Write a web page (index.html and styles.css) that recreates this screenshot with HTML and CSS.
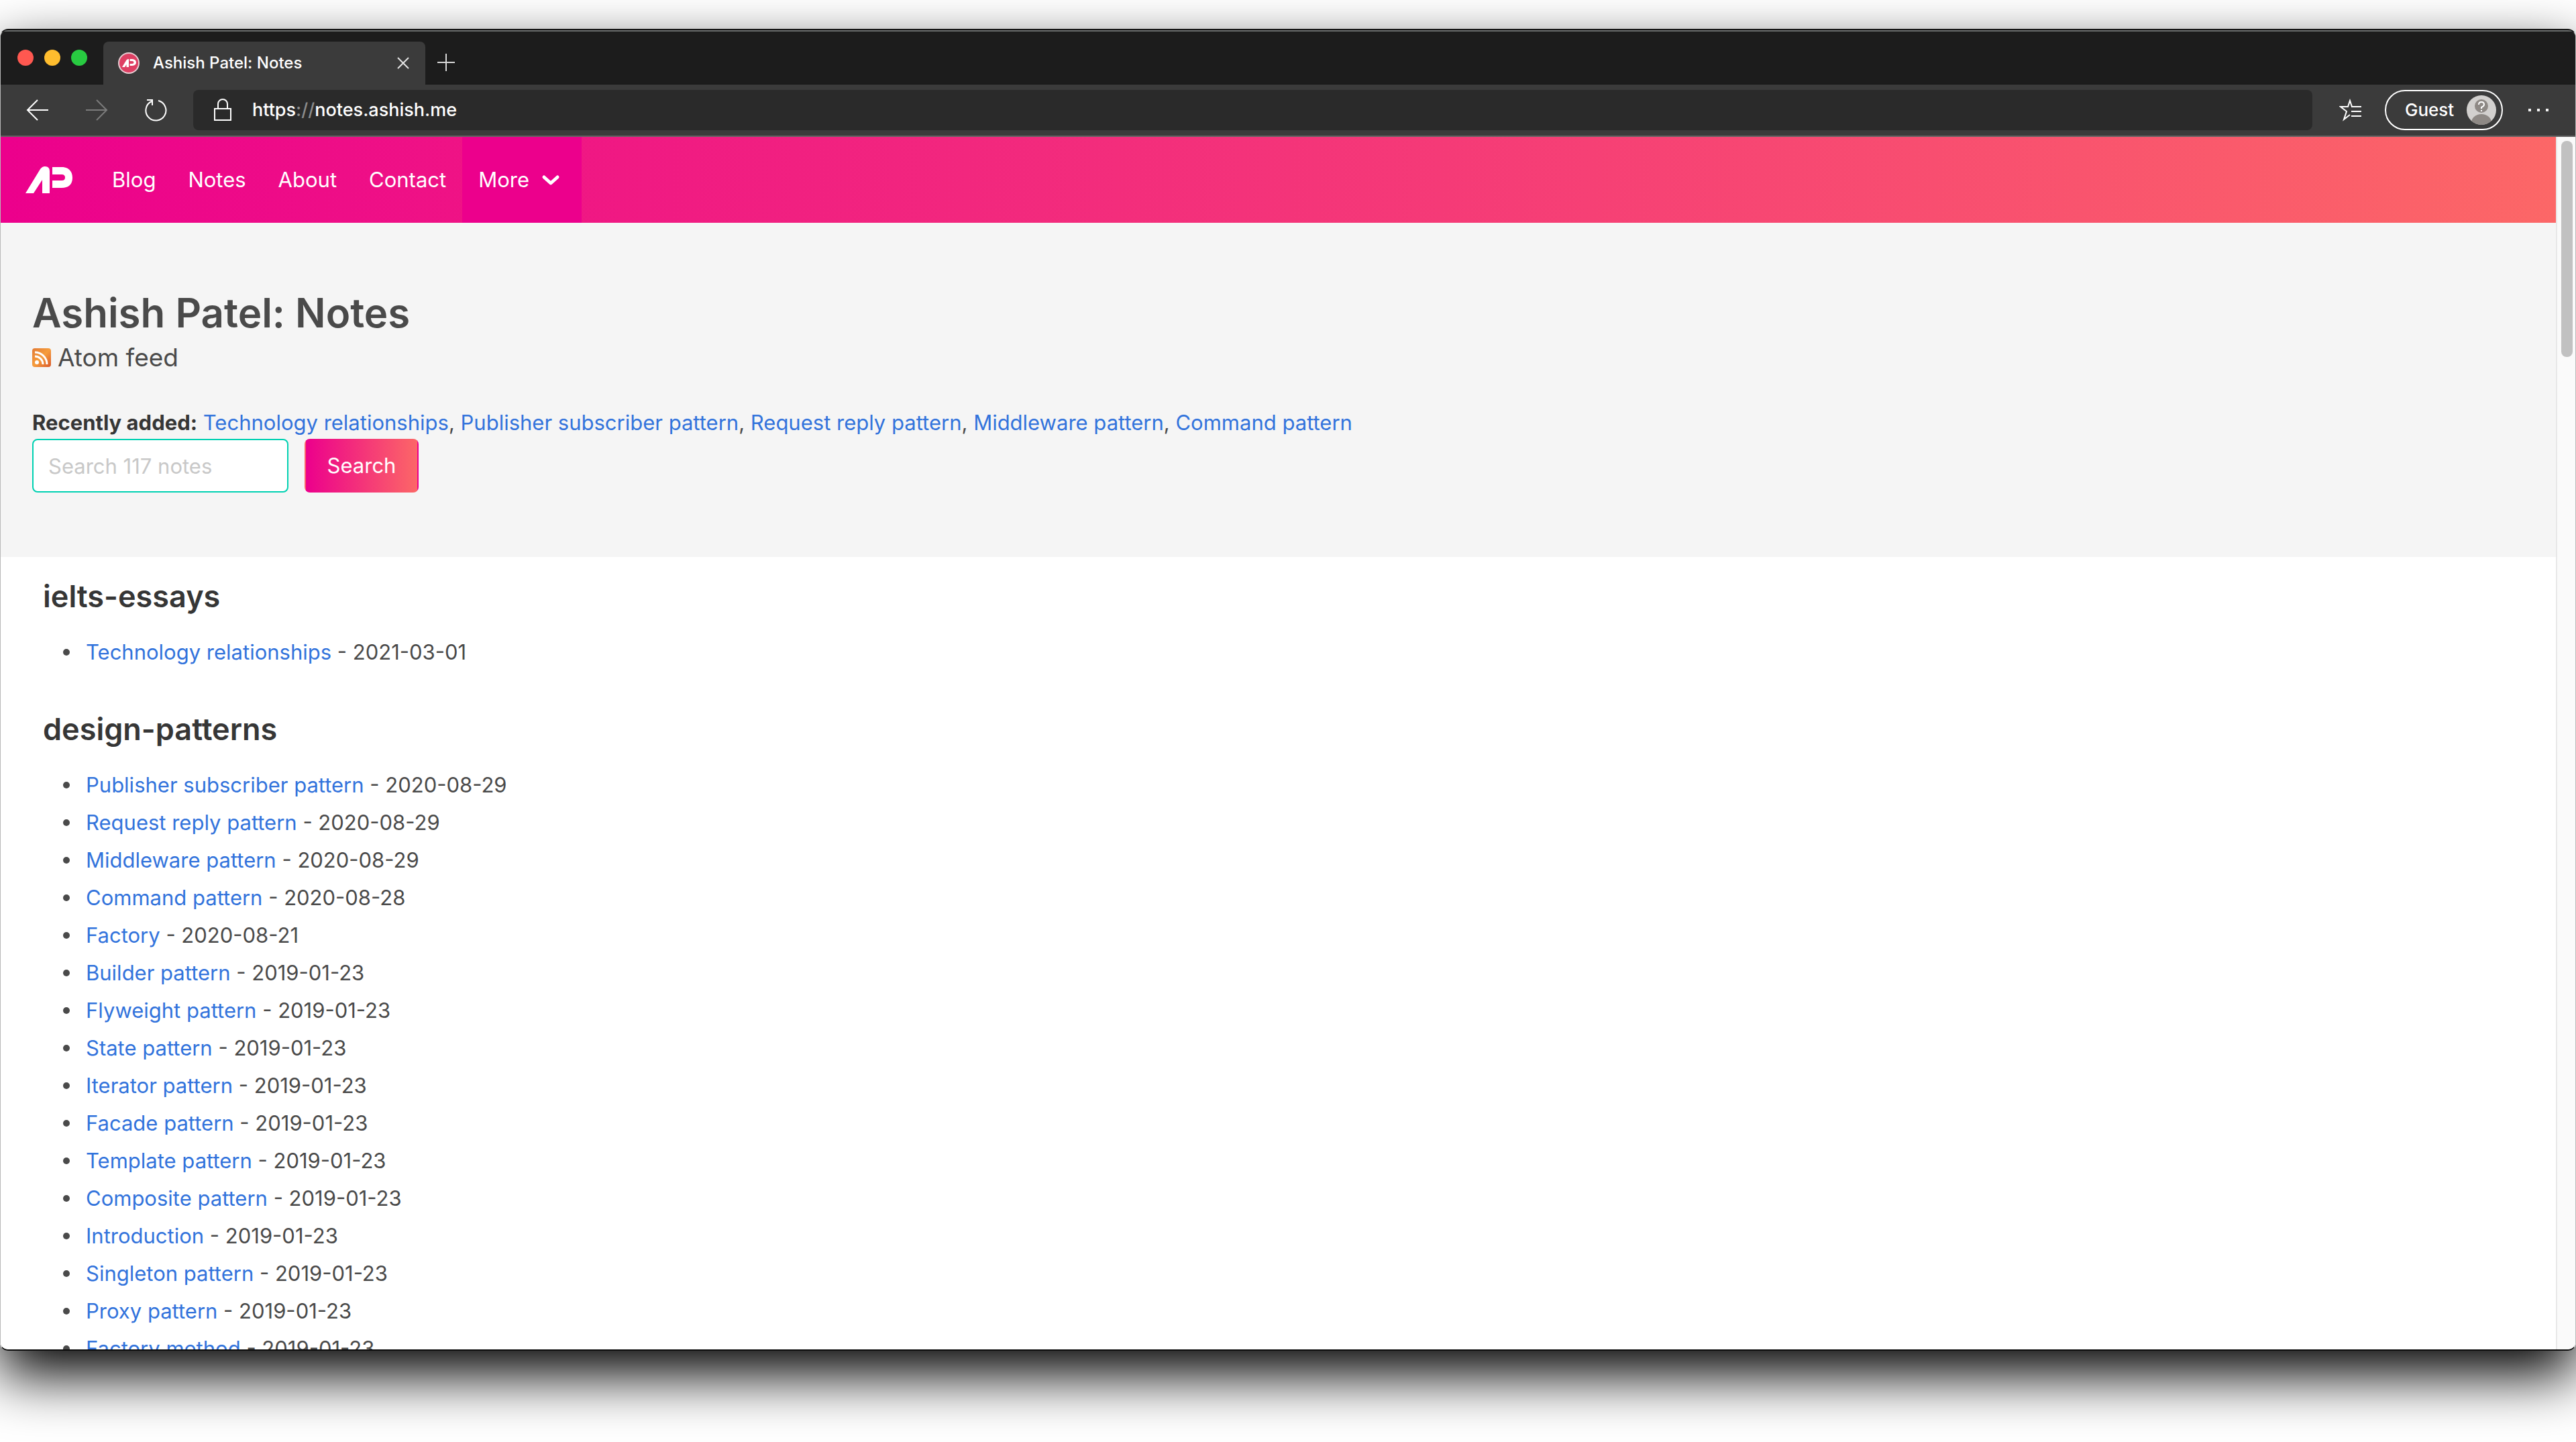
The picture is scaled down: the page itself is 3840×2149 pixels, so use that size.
FILE: index.html
```html
<!DOCTYPE html>
<html lang="en">
<head>
<meta charset="utf-8">
<title>Ashish Patel: Notes</title>
<link rel="stylesheet" href="styles.css">
</head>
<body>
<div class="window">
  <header class="chrome">
    <div class="tabstrip">
      <div class="lights"><span class="light red"></span><span class="light yellow"></span><span class="light green"></span></div>
      <div class="tab">
        <svg class="favicon" viewBox="0 0 32 32"><circle cx="16" cy="16" r="15" fill="#de3f63" stroke="#e8cdd3" stroke-width="2"/><path fill="#fff" d="M6 22 12.500 11.500Q13.500 9.500 16 10V22H12.500V18L10 22ZM17.500 10H21Q27 10.500 27 15 27 19.500 21 20H17.500V17H21Q23.500 17 23.500 15T21 13H17.500Z"/></svg>
        <span class="tab-title">Ashish Patel: Notes</span>
        <button class="icon-button tab-close" aria-label="Close tab"><svg width="18" height="18" viewBox="0 0 18 18"><path d="M1 1 17 17M17 1 1 17" stroke="#e4e4e4" stroke-width="2"/></svg></button>
      </div>
      <button class="icon-button new-tab" aria-label="New tab"><svg width="26" height="26" viewBox="0 0 26 26"><path d="M13 0V26M0 13H26" stroke="#d8d8d8" stroke-width="2"/></svg></button>
    </div>
    <div class="toolbar">
      <div class="history">
        <button class="icon-button" aria-label="Back"><svg width="34" height="32" viewBox="0 0 34 32"><path d="M17 1 2 16 17 31M2 16H33" fill="none" stroke="#fff" stroke-width="2"/></svg></button>
        <button class="icon-button" aria-label="Forward" disabled><svg width="34" height="32" viewBox="0 0 34 32"><path d="M17 1 32 16 17 31M32 16H1" fill="none" stroke="#7c7c7c" stroke-width="2"/></svg></button>
        <button class="icon-button" aria-label="Reload"><svg width="34" height="34" viewBox="0 0 34 34"><path d="M21 3A15 15 0 1 1 11 4M4 2H12V10" fill="none" stroke="#fff" stroke-width="2"/></svg></button>
      </div>
      <div class="address">
        <svg width="26" height="34" viewBox="0 0 26 34"><path d="M1 15H25V32H1ZM6 15V8A7 7 0 0 1 20 8V15" fill="none" stroke="#fff" stroke-width="2"/></svg>
        <span class="url">https<span class="dim">://</span>notes.ashish.me</span>
      </div>
      <button class="icon-button favourites" aria-label="Favourites"><svg width="34" height="34" viewBox="0 0 34 34"><path d="M21 12H19L16 3 13 12H2L11 19 7 31 16 24M18 12H33M18 19H33M18 26H33" fill="none" stroke="#fff" stroke-width="2"/></svg></button>
      <button class="profile">Guest
        <svg class="avatar" viewBox="0 0 44 44"><clipPath id="disc"><circle cx="22" cy="22" r="22"/></clipPath><g clip-path="url(#disc)"><path fill="#d2d0ce" d="M0 0H44V44H0Z"/><ellipse cx="22" cy="41" rx="15" ry="13" fill="#8e8985"/><circle cx="22" cy="16" r="11" fill="#8e8985" stroke="#d2d0ce" stroke-width="2"/><path d="M18 14Q18 10 22 10T26 14Q26 16 22 18V20M22 22V24" fill="none" stroke="#fff" stroke-width="2"/></g></svg>
      </button>
      <button class="icon-button more-menu" aria-label="Settings and more"><svg width="30" height="4" viewBox="0 0 30 4"><path d="M0 0H4V4H0ZM13 0H17V4H13ZM26 0H30V4H26Z" fill="#f0f0f0"/></svg></button>
    </div>
  </header>
  <div class="viewport">
    <div class="page">
      <nav class="navbar">
        <a class="brand" href="#" aria-label="Ashish Patel"><svg width="70" height="40" viewBox="0 0 70 40"><path fill="#fff" d="M0 40 22 4Q25 0 29 0 36 0 36 7V40H25V20L12 40ZM40 1H54C64 1 70 7 70 17S64 32 54 32H40V21H54Q59 21 59 16.500T54 12H40Z"/></svg></a>
        <a class="nav-item" href="#">Blog</a>
        <a class="nav-item" href="#">Notes</a>
        <a class="nav-item" href="#">About</a>
        <a class="nav-item" href="#">Contact</a>
        <button class="nav-item nav-more">More <svg width="28" height="22" viewBox="0 0 28 22"><path d="M4 7 14 16 24 7" fill="none" stroke="#fff" stroke-width="5" stroke-linecap="round" stroke-linejoin="round"/></svg></button>
      </nav>
      <section class="hero">
        <h1>Ashish Patel: Notes</h1>
        <p class="feed"><a href="#"><svg width="28" height="28" viewBox="0 0 28 28"><defs><linearGradient id="rss" x1="0" y1="0" x2="1" y2="1"><stop offset="0" stop-color="#e27a35"/><stop offset=".5" stop-color="#f69d3c"/><stop offset="1" stop-color="#d9582a"/></linearGradient></defs><rect width="28" height="28" rx="4" fill="url(#rss)"/><circle cx="7" cy="21" r="3" fill="#fff"/><path d="M4 12A12 12 0 0 1 16 24M4 6A18 18 0 0 1 22 24" fill="none" stroke="#fff" stroke-width="3"/></svg>Atom feed</a></p>
        <p class="recent"><strong>Recently added:</strong> <a href="#">Technology relationships</a>, <a href="#">Publisher subscriber pattern</a>, <a href="#">Request reply pattern</a>, <a href="#">Middleware pattern</a>, <a href="#">Command pattern</a></p>
        <form class="search">
          <input type="text" placeholder="Search 117 notes" aria-label="Search notes">
          <button type="button">Search</button>
        </form>
      </section>
      <main class="content">
        <h2>ielts-essays</h2>
        <ul>
          <li><a href="#">Technology relationships</a> - 2021-03-01</li>
        </ul>
        <h2>design-patterns</h2>
        <ul>
          <li><a href="#">Publisher subscriber pattern</a> - 2020-08-29</li>
          <li><a href="#">Request reply pattern</a> - 2020-08-29</li>
          <li><a href="#">Middleware pattern</a> - 2020-08-29</li>
          <li><a href="#">Command pattern</a> - 2020-08-28</li>
          <li><a href="#">Factory</a> - 2020-08-21</li>
          <li><a href="#">Builder pattern</a> - 2019-01-23</li>
          <li><a href="#">Flyweight pattern</a> - 2019-01-23</li>
          <li><a href="#">State pattern</a> - 2019-01-23</li>
          <li><a href="#">Iterator pattern</a> - 2019-01-23</li>
          <li><a href="#">Facade pattern</a> - 2019-01-23</li>
          <li><a href="#">Template pattern</a> - 2019-01-23</li>
          <li><a href="#">Composite pattern</a> - 2019-01-23</li>
          <li><a href="#">Introduction</a> - 2019-01-23</li>
          <li><a href="#">Singleton pattern</a> - 2019-01-23</li>
          <li><a href="#">Proxy pattern</a> - 2019-01-23</li>
          <li><a href="#">Factory method</a> - 2019-01-23</li>
        </ul>
      </main>
    </div>
    <div class="scrollbar"><div class="thumb"></div></div>
  </div>
</div>
</body>
</html>
```
FILE: styles.css
```css
* { box-sizing: border-box; }
body {
  margin: 0;
  height: 100vh;
  padding: 43px 0 136px;
  overflow: hidden;
  display: flex;
  background: #fff;
  color: #4a4a4a;
  font: 31px/48px Inter, "Liberation Sans", sans-serif;
}
a { color: #3273dc; text-decoration: none; }
button { font: inherit; color: inherit; border: 0; margin: 0; padding: 0; background: none; }
svg { display: block; flex: none; }

.window {
  flex: 1;
  min-width: 0;
  display: flex;
  flex-direction: column;
  overflow: hidden;
  border-radius: 12px;
  border: 1px solid #b8b8b8;
  border-top: 2px solid #141414;
  border-bottom: 2px solid #0c0c0c;
  box-shadow: 0 36px 84px #000;
}

/* Browser chrome */
.chrome { background: #3b3b3b; border-bottom: 2px solid #626262; margin: 0 -1px; color: #fff; font-weight: 500; }
.tabstrip {
  height: 81px;
  display: flex;
  align-items: flex-end;
  background: #1c1c1c;
  border-top: 2px solid #6a6d6c;
  border-bottom: 1px solid #161616;
}
.lights { display: flex; gap: 16px; padding: 0 24px 27px 26px; }
.light { width: 24px; height: 24px; border-radius: 50%; }
.red { background: #ff5850; }
.yellow { background: #ffbd2e; }
.green { background: #28cb41; }
.tab {
  width: 480px;
  height: 64px;
  margin-bottom: -1px;
  padding: 0 24px 0 22px;
  display: flex;
  align-items: center;
  border-radius: 8px 8px 0 0;
  background: #3b3b3b;
  font-size: 24px;
}
.favicon { width: 32px; height: 32px; margin-right: 20px; }
.tab-close { margin-left: auto; }
.icon-button { display: flex; align-items: center; }
.new-tab { padding: 0 18px 19px; }
.toolbar { height: 76px; display: flex; align-items: center; padding: 0 41px 0 39px; }
.history { display: flex; gap: 54px; margin-right: 39px; }
.address {
  flex: 1;
  height: 60px;
  display: flex;
  align-items: center;
  gap: 31px;
  padding: 0 31px;
  border-radius: 8px;
  background: #2a2a2a;
  font-size: 27px;
}
.dim { color: #8c8c8c; }
.favourites { margin: 0 34px 0 40px; }
.profile {
  width: 176px;
  height: 60px;
  display: flex;
  align-items: center;
  justify-content: space-between;
  padding: 0 8px 0 28px;
  border: 2px solid #fff;
  border-radius: 30px;
  font-size: 26px;
}
.avatar { width: 44px; height: 44px; }
.more-menu { margin-left: 38px; }

/* Web page */
.viewport { flex: 1; min-height: 0; display: flex; }
.page { flex: 1; min-width: 0; overflow: hidden; background: #fff; }
.navbar {
  height: 128px;
  display: flex;
  align-items: stretch;
  padding-left: 37px;
  background: linear-gradient(90deg, #ec008c, #fc6767);
}
.brand { display: flex; align-items: center; margin-right: 35px; }
.nav-item { display: flex; align-items: center; padding: 0 24px; color: #fff; }
.nav-more { gap: 18px; background: #ec008c; padding-right: 32px; }
.hero { padding: 96px 47px; background: #f5f5f5; }
h1 { margin: 0 0 4px; font-size: 60px; line-height: 76px; font-weight: 600; }
.feed { margin: 0 0 48px; font-size: 37px; line-height: 50px; }
.feed a { display: flex; align-items: center; gap: 10px; color: inherit; }
.recent { margin: 0; }
strong { color: #363636; font-weight: 700; }
.search { display: flex; gap: 24px; }
.search input {
  width: 382px;
  height: 80px;
  padding: 0 22px;
  border: 2px solid #00d1b2;
  border-radius: 8px;
  background: #fff;
  color: #363636;
  font: inherit;
}
.search input::placeholder { color: #c8c8c8; opacity: 1; }
.search button {
  width: 170px;
  border: 2px solid transparent;
  border-radius: 8px;
  color: #fff;
  background: linear-gradient(90deg, #ec008c, #fc6767);
}
.content { padding: 32px 63px; }
h2 { margin: 0; color: #363636; font-size: 45px; line-height: 54px; font-weight: 600; }
ul { margin: 32px 0 64px; padding-left: 64px; list-style: none; }
li + li { margin-top: 8px; }
li::before {
  content: "";
  display: inline-block;
  width: 10px;
  height: 10px;
  margin: 0 24px 0 -34px;
  border-radius: 50%;
  background: #4a4a4a;
  vertical-align: 6px;
}
.scrollbar { width: 29px; padding: 6px 4px 0 6px; border-left: 2px solid #e8e8e8; background: #fafafa; }
.thumb { height: 322px; border-radius: 8px; background: #c1c1c1; }
```
